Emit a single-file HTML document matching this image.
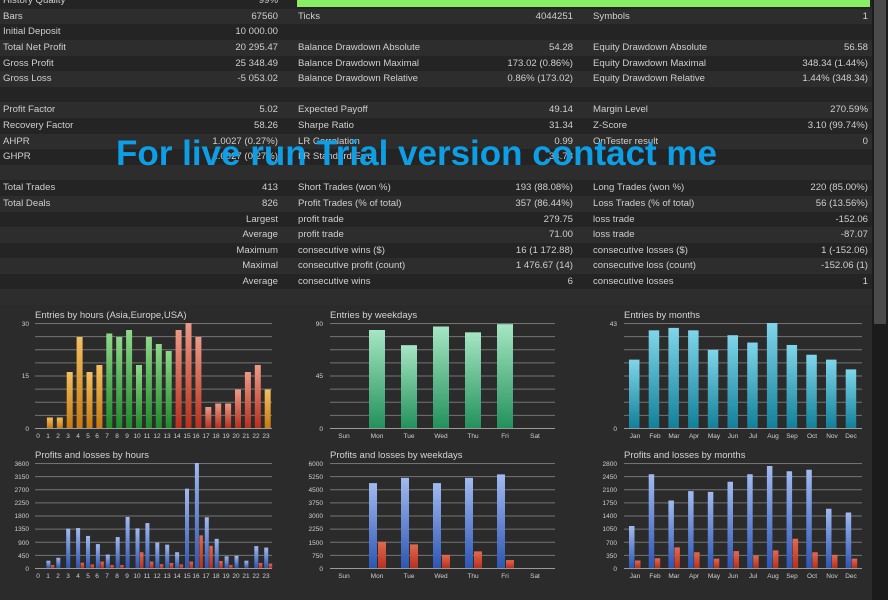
<!DOCTYPE html>
<html><head><meta charset="utf-8"><style>
*{margin:0;padding:0;box-sizing:border-box}
body{width:888px;height:600px;overflow:hidden;background:#2b2b2b;font-family:"Liberation Sans",sans-serif;color:#cfcfcf;position:relative}
#tbl{position:absolute;left:0;top:-6.8px;width:872px}
.r{height:15.6px;line-height:15.6px;font-size:9.6px;position:relative;background:#242424}
.r:nth-child(even){background:#2d2d2d}
.r span{position:absolute;white-space:nowrap}
.l1{left:3px}.v1{right:594px}.l2{left:298px}.v2{right:299px}.l3{left:593px}.v3{right:4px}
#wm{position:absolute;left:116px;top:134px;font:bold 35px "Liberation Sans",sans-serif;color:#0d9ee6;white-space:nowrap}
#sb{position:absolute;left:872px;top:0;width:16px;height:600px;background:#1b1b1b}
#th{position:absolute;left:874px;top:0;width:12px;height:324px;background:#4a4a4a}
svg{position:absolute;left:0;top:0}
svg text{font-family:"Liberation Sans",sans-serif}
</style></head><body>
<div id="tbl">
<div class="r"><span class="l1">History Quality</span><span class="v1">99%</span><span style="left:297px;top:0;width:573px;height:13.6px;background:#88ee66"></span></div>
<div class="r"><span class="l1">Bars</span><span class="v1">67560</span><span class="l2">Ticks</span><span class="v2">4044251</span><span class="l3">Symbols</span><span class="v3">1</span></div>
<div class="r"><span class="l1">Initial Deposit</span><span class="v1">10 000.00</span></div>
<div class="r"><span class="l1">Total Net Profit</span><span class="v1">20 295.47</span><span class="l2">Balance Drawdown Absolute</span><span class="v2">54.28</span><span class="l3">Equity Drawdown Absolute</span><span class="v3">56.58</span></div>
<div class="r"><span class="l1">Gross Profit</span><span class="v1">25 348.49</span><span class="l2">Balance Drawdown Maximal</span><span class="v2">173.02 (0.86%)</span><span class="l3">Equity Drawdown Maximal</span><span class="v3">348.34 (1.44%)</span></div>
<div class="r"><span class="l1">Gross Loss</span><span class="v1">-5 053.02</span><span class="l2">Balance Drawdown Relative</span><span class="v2">0.86% (173.02)</span><span class="l3">Equity Drawdown Relative</span><span class="v3">1.44% (348.34)</span></div>
<div class="r"></div>
<div class="r"><span class="l1">Profit Factor</span><span class="v1">5.02</span><span class="l2">Expected Payoff</span><span class="v2">49.14</span><span class="l3">Margin Level</span><span class="v3">270.59%</span></div>
<div class="r"><span class="l1">Recovery Factor</span><span class="v1">58.26</span><span class="l2">Sharpe Ratio</span><span class="v2">31.34</span><span class="l3">Z-Score</span><span class="v3">3.10 (99.74%)</span></div>
<div class="r"><span class="l1">AHPR</span><span class="v1">1.0027 (0.27%)</span><span class="l2">LR Correlation</span><span class="v2">0.99</span><span class="l3">OnTester result</span><span class="v3">0</span></div>
<div class="r"><span class="l1">GHPR</span><span class="v1">1.0027 (0.27%)</span><span class="l2">LR Standard Error</span><span class="v2">34.78</span></div>
<div class="r"></div>
<div class="r"><span class="l1">Total Trades</span><span class="v1">413</span><span class="l2">Short Trades (won %)</span><span class="v2">193 (88.08%)</span><span class="l3">Long Trades (won %)</span><span class="v3">220 (85.00%)</span></div>
<div class="r"><span class="l1">Total Deals</span><span class="v1">826</span><span class="l2">Profit Trades (% of total)</span><span class="v2">357 (86.44%)</span><span class="l3">Loss Trades (% of total)</span><span class="v3">56 (13.56%)</span></div>
<div class="r"><span class="v1">Largest</span><span class="l2">profit trade</span><span class="v2">279.75</span><span class="l3">loss trade</span><span class="v3">-152.06</span></div>
<div class="r"><span class="v1">Average</span><span class="l2">profit trade</span><span class="v2">71.00</span><span class="l3">loss trade</span><span class="v3">-87.07</span></div>
<div class="r"><span class="v1">Maximum</span><span class="l2">consecutive wins ($)</span><span class="v2">16 (1 172.88)</span><span class="l3">consecutive losses ($)</span><span class="v3">1 (-152.06)</span></div>
<div class="r"><span class="v1">Maximal</span><span class="l2">consecutive profit (count)</span><span class="v2">1 476.67 (14)</span><span class="l3">consecutive loss (count)</span><span class="v3">-152.06 (1)</span></div>
<div class="r"><span class="v1">Average</span><span class="l2">consecutive wins</span><span class="v2">6</span><span class="l3">consecutive losses</span><span class="v3">1</span></div>
<div class="r"></div>
</div>
<div id="wm">For live run Trial version contact me</div>

<svg width="872" height="600" viewBox="0 0 872 600" style="top:0">
<defs>
<linearGradient id="go" x1="0" y1="0" x2="0" y2="1"><stop offset="0" stop-color="#c77a10"/><stop offset="1" stop-color="#f4c060"/></linearGradient>
<linearGradient id="gg" x1="0" y1="0" x2="0" y2="1"><stop offset="0" stop-color="#1f8a2a"/><stop offset="1" stop-color="#8fd88a"/></linearGradient>
<linearGradient id="gr" x1="0" y1="0" x2="0" y2="1"><stop offset="0" stop-color="#b8301c"/><stop offset="1" stop-color="#ec9a88"/></linearGradient>
<linearGradient id="gm" x1="0" y1="0" x2="0" y2="1"><stop offset="0" stop-color="#23915c"/><stop offset="1" stop-color="#a6e6c4"/></linearGradient>
<linearGradient id="gc" x1="0" y1="0" x2="0" y2="1"><stop offset="0" stop-color="#12809a"/><stop offset="1" stop-color="#80d6ea"/></linearGradient>
<linearGradient id="gb" x1="0" y1="0" x2="0" y2="1"><stop offset="0" stop-color="#2d56b4"/><stop offset="1" stop-color="#a2baf0"/></linearGradient>
<linearGradient id="gl" x1="0" y1="0" x2="0" y2="1"><stop offset="0" stop-color="#b8301c"/><stop offset="1" stop-color="#e06a50"/></linearGradient>
<pattern id="grid" width="10" height="13.125" patternUnits="userSpaceOnUse" y="323"><rect width="10" height="1" fill="#747474"/></pattern>
<pattern id="grid2" width="10" height="13.125" patternUnits="userSpaceOnUse" y="463"><rect width="10" height="1" fill="#747474"/></pattern>
</defs>
<g font-size="9.5" fill="#d4d4d4">
<text x="35" y="318">Entries by hours (Asia,Europe,USA)</text>
<text x="330" y="318">Entries by weekdays</text>
<text x="624" y="318">Entries by months</text>
<text x="35" y="458">Profits and losses by hours</text>
<text x="330" y="458">Profits and losses by weekdays</text>
<text x="624" y="458">Profits and losses by months</text>
</g>
<rect x="35" y="323" width="237" height="106" fill="url(#grid)"/>
<rect x="330" y="323" width="225" height="106" fill="url(#grid)"/>
<rect x="624" y="323" width="238" height="106" fill="url(#grid)"/>
<rect x="35" y="463" width="237" height="106" fill="url(#grid2)"/>
<rect x="330" y="463" width="225" height="106" fill="url(#grid2)"/>
<rect x="624" y="463" width="238" height="106" fill="url(#grid2)"/>
<g fill="#9a9a9a"><rect x="35" y="428" width="237" height="1"/><rect x="330" y="428" width="225" height="1"/><rect x="624" y="428" width="238" height="1"/><rect x="35" y="568" width="237" height="1"/><rect x="330" y="568" width="225" height="1"/><rect x="624" y="568" width="238" height="1"/></g>
<g font-size="6.5" fill="#cfcfcf" text-anchor="end">
<text x="29" y="326">30</text><text x="29" y="378">15</text><text x="29" y="431">0</text>
<text x="323" y="326">90</text><text x="323" y="378">45</text><text x="323" y="431">0</text>
<text x="617" y="326">43</text><text x="617" y="431">0</text>
<text x="29" y="466">3600</text><text x="29" y="479">3150</text><text x="29" y="492">2700</text><text x="29" y="505">2250</text><text x="29" y="518">1800</text><text x="29" y="531">1350</text><text x="29" y="545">900</text><text x="29" y="558">450</text><text x="29" y="571">0</text>
<text x="323" y="466">6000</text><text x="323" y="479">5250</text><text x="323" y="492">4500</text><text x="323" y="505">3750</text><text x="323" y="518">3000</text><text x="323" y="531">2250</text><text x="323" y="545">1500</text><text x="323" y="558">750</text><text x="323" y="571">0</text>
<text x="617" y="466">2800</text><text x="617" y="479">2450</text><text x="617" y="492">2100</text><text x="617" y="505">1750</text><text x="617" y="518">1400</text><text x="617" y="531">1050</text><text x="617" y="545">700</text><text x="617" y="558">350</text><text x="617" y="571">0</text>
</g>
<g font-size="6.5" fill="#cfcfcf" text-anchor="middle">
<text x="38" y="438">0</text><text x="48" y="438">1</text><text x="58" y="438">2</text><text x="68" y="438">3</text><text x="78" y="438">4</text><text x="88" y="438">5</text><text x="97" y="438">6</text><text x="107" y="438">7</text><text x="117" y="438">8</text><text x="127" y="438">9</text><text x="137" y="438">10</text><text x="147" y="438">11</text><text x="157" y="438">12</text><text x="167" y="438">13</text><text x="177" y="438">14</text><text x="187" y="438">15</text><text x="196" y="438">16</text><text x="206" y="438">17</text><text x="216" y="438">18</text><text x="226" y="438">19</text><text x="236" y="438">20</text><text x="246" y="438">21</text><text x="256" y="438">22</text><text x="266" y="438">23</text>
<text x="38" y="578">0</text><text x="48" y="578">1</text><text x="58" y="578">2</text><text x="68" y="578">3</text><text x="78" y="578">4</text><text x="88" y="578">5</text><text x="97" y="578">6</text><text x="107" y="578">7</text><text x="117" y="578">8</text><text x="127" y="578">9</text><text x="137" y="578">10</text><text x="147" y="578">11</text><text x="157" y="578">12</text><text x="167" y="578">13</text><text x="177" y="578">14</text><text x="187" y="578">15</text><text x="196" y="578">16</text><text x="206" y="578">17</text><text x="216" y="578">18</text><text x="226" y="578">19</text><text x="236" y="578">20</text><text x="246" y="578">21</text><text x="256" y="578">22</text><text x="266" y="578">23</text>
<text x="344" y="438">Sun</text><text x="377" y="438">Mon</text><text x="409" y="438">Tue</text><text x="441" y="438">Wed</text><text x="473" y="438">Thu</text><text x="505" y="438">Fri</text><text x="535" y="438">Sat</text>
<text x="344" y="578">Sun</text><text x="377" y="578">Mon</text><text x="409" y="578">Tue</text><text x="441" y="578">Wed</text><text x="473" y="578">Thu</text><text x="505" y="578">Fri</text><text x="535" y="578">Sat</text>
<text x="635" y="438">Jan</text><text x="655" y="438">Feb</text><text x="674" y="438">Mar</text><text x="694" y="438">Apr</text><text x="714" y="438">May</text><text x="733" y="438">Jun</text><text x="753" y="438">Jul</text><text x="773" y="438">Aug</text><text x="792" y="438">Sep</text><text x="812" y="438">Oct</text><text x="832" y="438">Nov</text><text x="851" y="438">Dec</text>
<text x="635" y="578">Jan</text><text x="655" y="578">Feb</text><text x="674" y="578">Mar</text><text x="694" y="578">Apr</text><text x="714" y="578">May</text><text x="733" y="578">Jun</text><text x="753" y="578">Jul</text><text x="773" y="578">Aug</text><text x="792" y="578">Sep</text><text x="812" y="578">Oct</text><text x="832" y="578">Nov</text><text x="851" y="578">Dec</text>
</g>
<g transform="translate(0,428) scale(1,-3.5)">
<g fill="url(#go)"><rect x="46.9" width="6" height="3"/><rect x="56.8" width="6" height="3"/><rect x="66.7" width="6" height="16"/><rect x="76.6" width="6" height="26"/><rect x="86.5" width="6" height="16"/><rect x="96.4" width="6" height="18"/><rect x="264.7" width="6" height="11"/></g>
<g fill="url(#gg)"><rect x="106.3" width="6" height="27"/><rect x="116.2" width="6" height="26"/><rect x="126.1" width="6" height="28"/><rect x="136" width="6" height="18"/><rect x="145.9" width="6" height="26"/><rect x="155.8" width="6" height="24"/><rect x="165.7" width="6" height="22"/></g>
<g fill="url(#gr)"><rect x="175.6" width="6" height="28"/><rect x="185.5" width="6" height="30"/><rect x="195.4" width="6" height="26"/><rect x="205.3" width="6" height="6"/><rect x="215.2" width="6" height="7"/><rect x="225.1" width="6" height="7"/><rect x="235" width="6" height="11"/><rect x="244.9" width="6" height="16"/><rect x="254.8" width="6" height="18"/></g>
</g>
<g transform="translate(0,568) scale(1,-0.029167)">
<g fill="url(#gb)"><rect x="46.4" width="4" height="250"/><rect x="56.3" width="4" height="350"/><rect x="66.2" width="4" height="1350"/><rect x="76.1" width="4" height="1370"/><rect x="86" width="4" height="1100"/><rect x="95.9" width="4" height="820"/><rect x="105.8" width="4" height="460"/><rect x="115.7" width="4" height="1060"/><rect x="125.6" width="4" height="1750"/><rect x="135.5" width="4" height="1360"/><rect x="145.4" width="4" height="1540"/><rect x="155.3" width="4" height="870"/><rect x="165.2" width="4" height="800"/><rect x="175.1" width="4" height="540"/><rect x="185" width="4" height="2720"/><rect x="194.9" width="4" height="3600"/><rect x="204.8" width="4" height="1740"/><rect x="214.7" width="4" height="1000"/><rect x="224.6" width="4" height="400"/><rect x="234.5" width="4" height="420"/><rect x="244.4" width="4" height="250"/><rect x="254.3" width="4" height="750"/><rect x="264.2" width="4" height="700"/></g>
<g fill="url(#gl)"><rect x="50.9" width="3.5" height="100"/><rect x="80.6" width="3.5" height="180"/><rect x="90.5" width="3.5" height="120"/><rect x="100.4" width="3.5" height="220"/><rect x="110.3" width="3.5" height="100"/><rect x="120.2" width="3.5" height="100"/><rect x="140" width="3.5" height="540"/><rect x="149.9" width="3.5" height="220"/><rect x="159.8" width="3.5" height="130"/><rect x="169.7" width="3.5" height="170"/><rect x="179.6" width="3.5" height="120"/><rect x="189.5" width="3.5" height="220"/><rect x="199.4" width="3.5" height="1120"/><rect x="209.3" width="3.5" height="760"/><rect x="219.2" width="3.5" height="240"/><rect x="229.1" width="3.5" height="100"/><rect x="258.8" width="3.5" height="170"/><rect x="268.7" width="3.5" height="150"/></g>
</g>
<g transform="translate(0,428) scale(1,-1.16667)" fill="url(#gm)">
<rect x="369" width="16" height="84"/><rect x="401" width="16" height="71"/><rect x="433" width="16" height="87"/><rect x="465" width="16" height="82"/><rect x="497" width="16" height="89"/>
</g>
<g transform="translate(0,568) scale(1,-0.0175)">
<g fill="url(#gb)"><rect x="369" width="8" height="4850"/><rect x="401" width="8" height="5150"/><rect x="433" width="8" height="4850"/><rect x="465" width="8" height="5150"/><rect x="497" width="8" height="5350"/></g>
<g fill="url(#gl)"><rect x="378" width="8" height="1500"/><rect x="410" width="8" height="1350"/><rect x="442" width="8" height="750"/><rect x="474" width="8" height="950"/><rect x="506" width="8" height="450"/></g>
</g>
<g transform="translate(0,428) scale(1,-2.4419)" fill="url(#gc)">
<rect x="629" width="10.5" height="28"/><rect x="648.7" width="10.5" height="40"/><rect x="668.4" width="10.5" height="41"/><rect x="688.1" width="10.5" height="40"/><rect x="707.8" width="10.5" height="32"/><rect x="727.5" width="10.5" height="38"/><rect x="747.2" width="10.5" height="35"/><rect x="766.9" width="10.5" height="43"/><rect x="786.6" width="10.5" height="34"/><rect x="806.3" width="10.5" height="30"/><rect x="826" width="10.5" height="28"/><rect x="845.7" width="10.5" height="24"/>
</g>
<g transform="translate(0,568) scale(1,-0.0375)">
<g fill="url(#gb)"><rect x="629" width="5.5" height="1120"/><rect x="648.7" width="5.5" height="2500"/><rect x="668.4" width="5.5" height="1800"/><rect x="688.1" width="5.5" height="2050"/><rect x="707.8" width="5.5" height="2030"/><rect x="727.5" width="5.5" height="2300"/><rect x="747.2" width="5.5" height="2500"/><rect x="766.9" width="5.5" height="2720"/><rect x="786.6" width="5.5" height="2580"/><rect x="806.3" width="5.5" height="2620"/><rect x="826" width="5.5" height="1580"/><rect x="845.7" width="5.5" height="1480"/></g>
<g fill="url(#gl)"><rect x="635" width="5.5" height="200"/><rect x="654.7" width="5.5" height="260"/><rect x="674.4" width="5.5" height="550"/><rect x="694.1" width="5.5" height="420"/><rect x="713.8" width="5.5" height="250"/><rect x="733.5" width="5.5" height="450"/><rect x="753.2" width="5.5" height="330"/><rect x="772.9" width="5.5" height="470"/><rect x="792.6" width="5.5" height="780"/><rect x="812.3" width="5.5" height="420"/><rect x="832" width="5.5" height="350"/><rect x="851.7" width="5.5" height="250"/></g>
</g>
</svg>
<div id="sb"></div><div id="th"></div>
</body></html>
